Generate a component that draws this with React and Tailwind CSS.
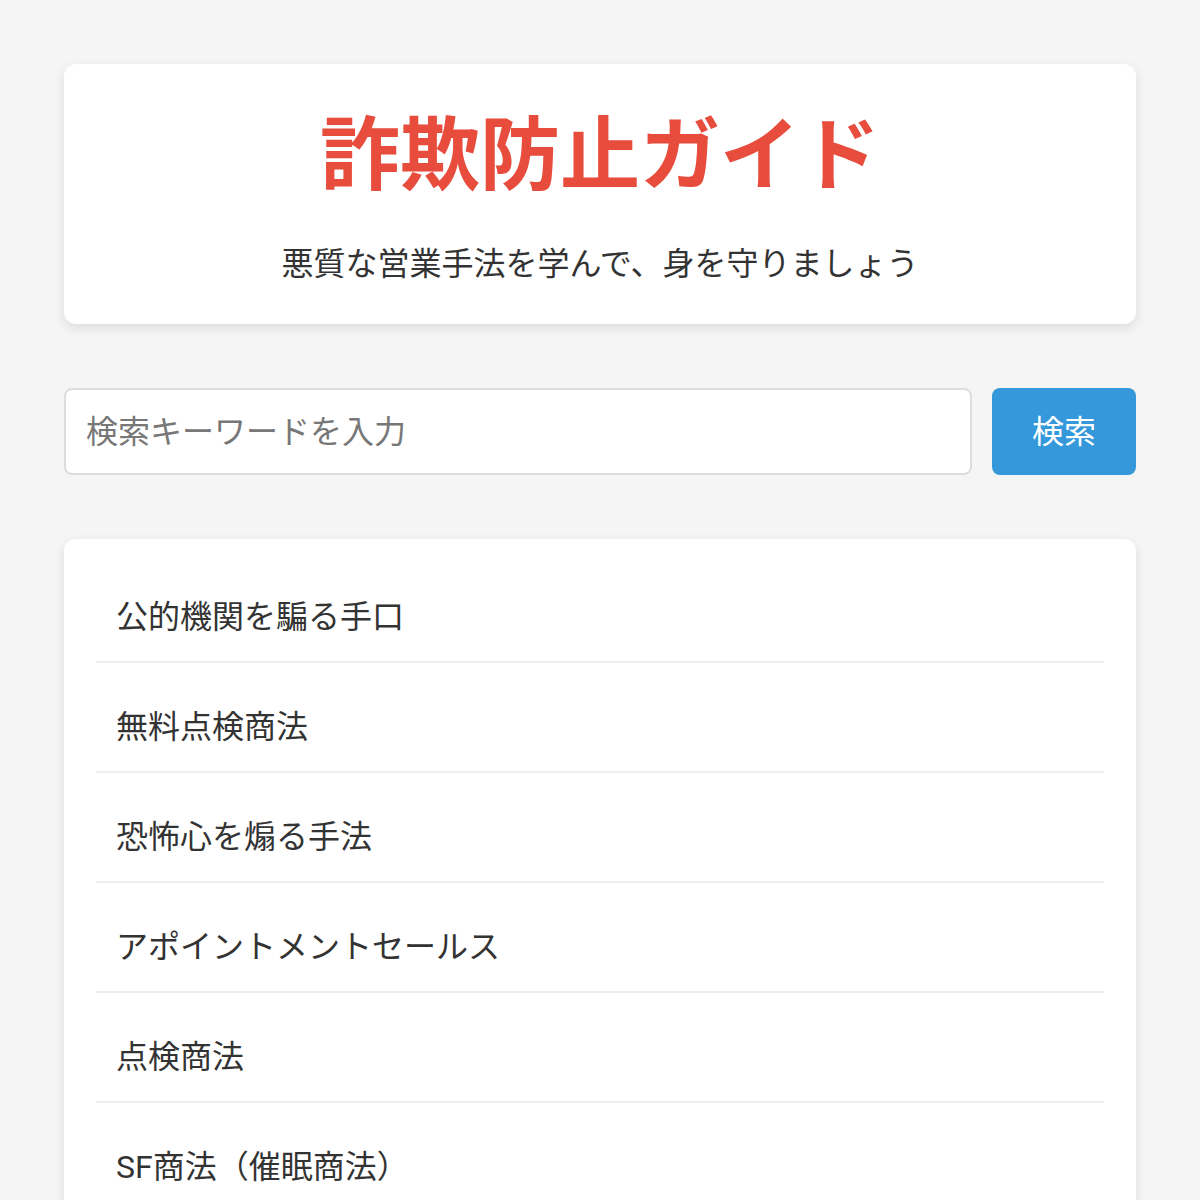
import React, { useState } from 'react';

const items = [
  '公的機関を騙る手口',
  '無料点検商法',
  '恐怖心を煽る手法',
  'アポイントメントセールス',
  '点検商法',
  'SF商法（催眠商法）',
];

function App() {
  const [keyword, setKeyword] = useState('');

  return (
    <div className="min-h-screen bg-[#f5f5f5] px-16 pt-16 text-[#333] font-['Roboto','Noto_Sans_CJK_JP',sans-serif]">
      <div className="bg-white rounded-xl shadow-[0_4px_12px_rgba(0,0,0,0.1)] pt-11 pb-9 text-center">
        <h1 className="text-[80px] leading-[96px] font-bold text-[#e74c3c]">詐欺防止ガイド</h1>
        <p className="mt-9 text-[32px] leading-[48px] text-[#333]">悪質な営業手法を学んで、身を守りましょう</p>
      </div>

      <div className="flex gap-5 mt-16">
        <input
          type="text"
          placeholder="検索キーワードを入力"
          className="flex-1 h-[87px] px-5 text-[32px] bg-white border-2 border-[#ddd] rounded-lg outline-none placeholder:text-[#777]"
          value={keyword}
          onChange={(e) => setKeyword(e.target.value)}
        />
        <button className="w-[144px] h-[87px] bg-[#3498db] text-white text-[32px] rounded-lg">検索</button>
      </div>

      <div className="bg-white rounded-xl shadow-[0_4px_12px_rgba(0,0,0,0.1)] mt-16 px-8 pt-[34px] pb-8">
        {items.map((item, index) => (
          <div key={index} className="px-5 py-5 mb-5 border-b-2 border-[#eee] text-[32px] leading-[48px]">
            {item}
          </div>
        ))}
      </div>
    </div>
  );
}

export default App;
